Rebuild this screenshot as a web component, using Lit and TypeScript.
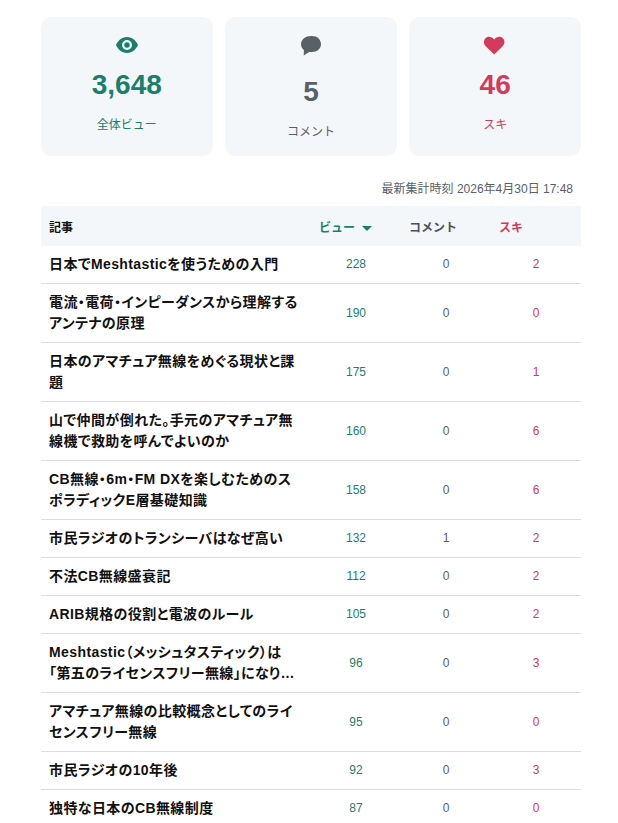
import { LitElement, html, css } from "lit";
import { customElement } from "lit/decorators.js";

const rows: [string, number, number, number][] = [
  ["日本でMeshtasticを使うための入門", 228, 0, 2],
  ["電流・電荷・インピーダンスから理解するアンテナの原理", 190, 0, 0],
  ["日本のアマチュア無線をめぐる現状と課題", 175, 0, 1],
  ["山で仲間が倒れた。手元のアマチュア無線機で救助を呼んでよいのか", 160, 0, 6],
  ["CB無線・6m・FM DXを楽しむためのスポラディックE層基礎知識", 158, 0, 6],
  ["市民ラジオのトランシーバはなぜ高い", 132, 1, 2],
  ["不法CB無線盛衰記", 112, 0, 2],
  ["ARIB規格の役割と電波のルール", 105, 0, 2],
  ["Meshtastic（メッシュタスティック）は「第五のライセンスフリー無線」になり…", 96, 0, 3],
  ["アマチュア無線の比較概念としてのライセンスフリー無線", 95, 0, 0],
  ["市民ラジオの10年後", 92, 0, 3],
  ["独特な日本のCB無線制度", 87, 0, 0],
];

@customElement("app-root")
export class AppRoot extends LitElement {
  static styles = css`
    :host {
      display: block;
      box-sizing: border-box;
      width: 618px;
      height: 823px;
      overflow: hidden;
      padding: 17px 37px 0 41px;
      background: #fff;
      color: #111;
      font-family: "Liberation Sans", "Noto Sans CJK JP", sans-serif;
    }
    .cards {
      display: grid;
      grid-template-columns: repeat(3, 1fr);
      gap: 12.6px;
      height: 139px;
    }
    .card {
      background: #f4f7fa;
      border-radius: 10px;
      display: flex;
      flex-direction: column;
      align-items: center;
      padding-top: 18px;
      box-sizing: border-box;
    }
    .icon { display: block; width: 24px; height: 21px; margin-bottom: 12px; }
    .tall { height: 28px; }
    .num { font-size: 28px; font-weight: 700; line-height: 34px; margin-bottom: 14px; }
    .lab { font-size: 12px; line-height: 18px; }
    .v { color: #1a7f6b; }
    .c { color: #586168; }
    .s { color: #d33a5c; }
    .stamp {
      text-align: right;
      font-size: 12px;
      line-height: 18px;
      color: #586168;
      padding: 24px 8px 8px 0;
    }
    table {
      width: 100%;
      border-collapse: collapse;
      table-layout: fixed;
    }
    th {
      background: #f4f7fa;
      font-size: 12px;
      font-weight: 700;
      height: 40px;
      padding: 0 8px;
      text-align: left;
      box-sizing: border-box;
    }
    th.t { width: 50%; }
    th.v { color: #1a7f6b; }
    th.c { color: #4a5158; }
    .arrow {
      display: inline-block;
      width: 0;
      height: 0;
      margin-left: 4px;
      vertical-align: 1px;
      border-left: 5px solid transparent;
      border-right: 5px solid transparent;
      border-top: 5px solid #1a7f6b;
    }
    td {
      padding: 8px;
      border-bottom: 1px solid #ddd;
      font-size: 12px;
      line-height: 21px;
      text-align: center;
    }
    td.title {
      font-size: 14px;
      font-weight: 700;
      text-align: left;
      color: #111;
      letter-spacing: 0.4px;
      font-feature-settings: "palt";
    }
  `;

  render() {
    return html`
      <div class="cards">
        <div class="card v">
          <svg class="icon" viewBox="0 0 24 21"><path fill="#1a7f6b" fill-rule="evenodd" d="M12 2C6.500 2 2.600 6.200 1 10c1.600 3.800 5.500 8 11 8s9.400-4.200 11-8C21.400 6.200 17.500 2 12 2zm0 3a5 5 0 1 1 0 10 5 5 0 0 1 0-10zm0 2.300a2.700 2.700 0 1 0 0 5.400 2.700 2.700 0 0 0 0-5.400z"/></svg>
          <div class="num">3,648</div>
          <div class="lab">全体ビュー</div>
        </div>
        <div class="card c">
          <svg class="icon tall" viewBox="0 0 24 28"><path fill="#586168" d="M12.500 1C6.500 1 2 4.400 2 9.200c0 2.400 1.200 4.400 2.900 5.800L4.700 20.500l5.400-3.600c.8.100 1.600.2 2.400.2 5.800 0 9.500-3.400 9.500-8S18.300 1 12.500 1z"/></svg>
          <div class="num">5</div>
          <div class="lab">コメント</div>
        </div>
        <div class="card s">
          <svg class="icon" viewBox="0 0 24 21"><path fill="#d33a5c" d="M11.200 19.400 3 11.600C.8 9.400.2 6 2.200 3.600 4.400 1 8.600 1.200 11.200 4.400c2.600-3.200 6.800-3.400 9-.8 2 2.400 1.400 5.800-.8 8L11.200 19.400z"/></svg>
          <div class="num">46</div>
          <div class="lab">スキ</div>
        </div>
      </div>
      <div class="stamp">最新集計時刻 2026年4月30日 17:48</div>
      <table>
        <thead>
          <tr>
            <th class="t">記事</th>
            <th class="v">ビュー <span class="arrow"></span></th>
            <th class="c">コメント</th>
            <th class="s">スキ</th>
          </tr>
        </thead>
        <tbody>
          ${rows.map(
            ([t, v, c, s]) => html`<tr>
              <td class="title">${t}</td>
              <td class="v">${v}</td>
              <td class="c">${c}</td>
              <td class="s">${s}</td>
            </tr>`
          )}
        </tbody>
      </table>
    `;
  }
}
